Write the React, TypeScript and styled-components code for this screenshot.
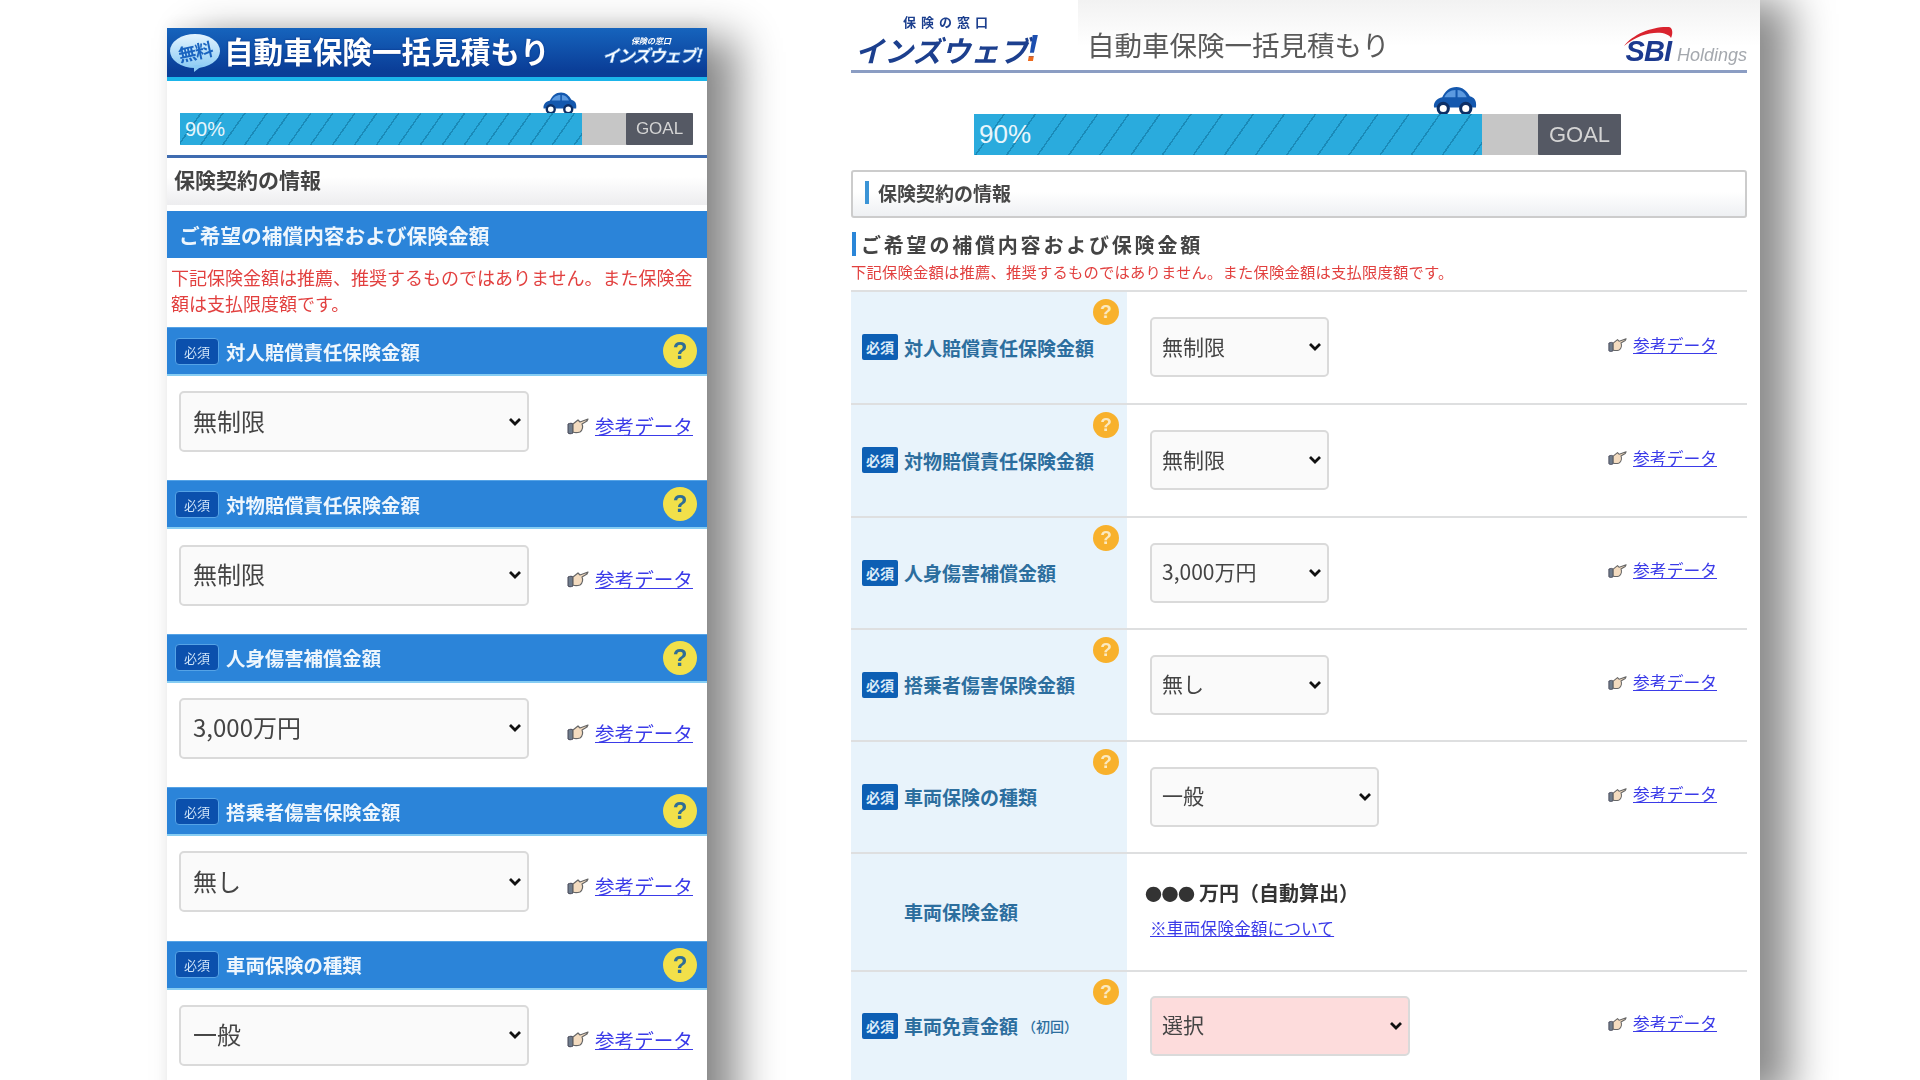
import styled, { createGlobalStyle } from "styled-components";

const GlobalStyle = createGlobalStyle`
  html, body {
    margin: 0;
    padding: 0;
    background: #fff;
  }
  body {
    font-family: "Noto Sans CJK JP", "Liberation Sans", sans-serif;
    overflow: hidden;
  }
`;

const Page = styled.div`
  display: flex;
  align-items: flex-start;
  width: 1920px;
  height: 1080px;
  overflow: hidden;
  padding-left: 167px;
  box-sizing: border-box;
  filter: blur(0.7px);
`;

/* ---------- shared drawings ---------- */

const Car = ({ width }: { width: number }) => (
  <svg width={width} viewBox="0 0 44 28">
    <path
      d="M2 22c-1-5 3-9 8-10 3-6 7-10 14-10 6 0 10 4 13 9 4 1 7 4 6 11z"
      fill="#1458ae"
    />
    <path d="M12 12c2-4 6-7 11-7v7z" fill="#5c9ae0" />
    <path d="M25 5c4 0 7 3 9 7h-9z" fill="#5c9ae0" />
    <circle cx="11" cy="23" r="5" fill="#fff" stroke="#0d2f66" strokeWidth="3" />
    <circle cx="33" cy="23" r="5" fill="#fff" stroke="#0d2f66" strokeWidth="3" />
  </svg>
);

const Hand = ({ width }: { width: number }) => (
  <svg width={width} viewBox="0 0 22 18">
    <path d="M1 7c2-1 4-1 5 0v9c-2 1-4 1-5 0z" fill="#6f7c8c" stroke="#445" strokeWidth="1" />
    <path
      d="M6 7l5-4 2 2 8-3-1 2-5 3c1 2 1 6-2 8-3 1-5 1-7 0z"
      fill="#f4dcc0"
      stroke="#666"
      strokeWidth="1.2"
      strokeLinejoin="round"
    />
  </svg>
);

const Track = styled.div<{ $w: number; $h: number }>`
  display: flex;
  width: ${({ $w }) => $w}px;
  height: ${({ $h }) => $h}px;
  background: #c6c6c6;
`;

const Fill = styled.div<{ $w: number; $size: number; $pitch: number }>`
  position: relative;
  display: flex;
  align-items: center;
  width: ${({ $w }) => $w}px;
  padding-left: 5px;
  box-sizing: border-box;
  color: #e8f6fc;
  font-family: "Liberation Sans", sans-serif;
  font-size: ${({ $size }) => $size}px;
  background: repeating-linear-gradient(
    125deg,
    #2aabdd 0,
    #2aabdd ${({ $pitch }) => $pitch - 1.5}px,
    #1a8ab8 ${({ $pitch }) => $pitch - 1.5}px,
    #1a8ab8 ${({ $pitch }) => $pitch}px
  );
`;

const CarSpot = styled.div`
  position: absolute;
  right: 5px;
  bottom: 100%;
  line-height: 0;
`;

const Goal = styled.div<{ $w: number; $size: number }>`
  display: flex;
  align-items: center;
  justify-content: center;
  width: ${({ $w }) => $w}px;
  margin-left: auto;
  background: #555964;
  color: #d4d4d4;
  font-family: "Liberation Sans", sans-serif;
  font-size: ${({ $size }) => $size}px;
  border-radius: 1px;
`;

const CHEVRON =
  "url(\"data:image/svg+xml,%3Csvg xmlns='http://www.w3.org/2000/svg' viewBox='0 0 14 10'%3E%3Cpath d='M2 2l5 5 5-5' fill='none' stroke='%23111' stroke-width='2.8'/%3E%3C/svg%3E\")";

const Select = styled.select<{
  $w: number;
  $h: number;
  $size: number;
  $pad: number;
  $pink?: boolean;
}>`
  appearance: none;
  width: ${({ $w }) => $w}px;
  height: ${({ $h }) => $h}px;
  flex-shrink: 0;
  padding: 0 24px 3px ${({ $pad }) => $pad}px;
  box-sizing: border-box;
  border: 2px solid #dadada;
  border-radius: 5px;
  background: ${CHEVRON} no-repeat right 5px center / 14px 10px
    ${({ $pink }) => ($pink ? "#fddcdc" : "#fafafa")};
  color: #444;
  font-family: "Noto Sans CJK JP", sans-serif;
  font-size: ${({ $size }) => $size}px;
`;

const RefLink = styled.a<{ $size: number; $gap: number }>`
  display: flex;
  align-items: center;
  gap: ${({ $gap }) => $gap}px;
  color: #3b3be8;
  font-size: ${({ $size }) => $size}px;
  line-height: 1.2;
  white-space: nowrap;

  span {
    text-decoration: underline;
  }
`;

const Help = styled.span<{ $size: number; $mobile?: boolean }>`
  display: flex;
  align-items: center;
  justify-content: center;
  width: ${({ $size }) => $size}px;
  height: ${({ $size }) => $size}px;
  border-radius: 50%;
  background: ${({ $mobile }) => ($mobile ? "#f2e04a" : "#f8b12c")};
  color: ${({ $mobile }) => ($mobile ? "#2f6d96" : "#fbe9c0")};
  font-family: "Liberation Sans", sans-serif;
  font-size: ${({ $size }) => Math.round($size * 0.72)}px;
  font-weight: 700;
`;

/* ---------- left panel (mobile) ---------- */

const Mobile = styled.section`
  flex-shrink: 0;
  width: 540px;
  height: 1100px;
  margin-top: 28px;
  background: #fff;
  box-shadow: 30px 10px 40px rgba(0, 0, 0, 0.46), 0 -6px 14px rgba(0, 0, 0, 0.06);
`;

const MobileHeader = styled.header`
  display: flex;
  align-items: center;
  height: 53px;
  box-sizing: border-box;
  padding: 0 3px 4px 3px;
  background: linear-gradient(#1664bd, #0a3d97 88%);
  border-bottom: 4px solid #1bb5ea;
`;

const Bubble = styled.span`
  position: relative;
  display: flex;
  align-items: center;
  justify-content: center;
  flex-shrink: 0;
  width: 50px;
  height: 34px;
  border-radius: 50%;
  background: linear-gradient(#e4f4fe, #8ccbf4);
  color: #1a64c0;
  font-size: 18px;
  font-weight: 700;
  letter-spacing: -1px;

  &::after {
    content: "";
    position: absolute;
    left: 24px;
    bottom: -4px;
    border-top: 7px solid #8ccbf4;
    border-right: 9px solid transparent;
  }
`;

const BubbleText = styled.span`
  display: block;
  transform: rotate(-12deg);
`;

const MobileTitle = styled.h1`
  margin: 0 0 0 4px;
  color: #fff;
  font-size: 29.6px;
  font-weight: 700;
  line-height: 1;
  white-space: nowrap;
  text-shadow: 0 0 2px #0a2f80;
`;

const MobileLogo = styled.div`
  display: flex;
  flex-direction: column;
  align-items: center;
  width: 106px;
  margin-left: auto;
  color: #fff;
  font-style: italic;
  font-weight: 700;
  line-height: 1.1;
  -webkit-text-stroke: 0.6px #7fb0e6;
`;

const MobileLogoTop = styled.span`
  font-size: 8px;
  -webkit-text-stroke: 0;
`;

const MobileLogoName = styled.span`
  font-size: 17px;
  letter-spacing: -1.5px;
  white-space: nowrap;
`;

const MobileProgress = styled.div`
  padding: 32px 14px 10px 13px;
  border-bottom: 3px solid #3f6cb0;
`;

const MobileSection = styled.h2`
  margin: 0;
  height: 47px;
  padding: 0 0 6px 7px;
  box-sizing: border-box;
  display: flex;
  align-items: center;
  color: #444;
  font-size: 21px;
  font-weight: 700;
  background: linear-gradient(#fff 40%, #ededef);
`;

const MobileBand = styled.h3`
  margin: 6px 0 0;
  height: 47px;
  padding-left: 12px;
  display: flex;
  align-items: center;
  color: #eef6fd;
  font-size: 20.7px;
  font-weight: 700;
  background: #2b84d9;
`;

const MobileNote = styled.p`
  margin: 0;
  height: 69px;
  padding: 7px 6px 0 4px;
  box-sizing: border-box;
  color: #e2403f;
  font-size: 18px;
  line-height: 25.5px;
`;

const ItemHead = styled.div`
  display: flex;
  align-items: center;
  height: 49px;
  box-sizing: border-box;
  padding: 0 10px 0 8px;
  background: #2b84d9;
  border-bottom: 2px solid #86cdf3;
  border-top: 1px solid #55a3e6;
  color: #eef6fd;
  font-size: 19.4px;
  font-weight: 700;
  white-space: nowrap;
`;

const MobileBadge = styled.span`
  display: flex;
  align-items: center;
  justify-content: center;
  width: 44px;
  height: 27px;
  margin-right: 7px;
  border: 1px solid #55a3e6;
  border-radius: 4px;
  box-sizing: border-box;
  background: #0b50ad;
  color: #cfe4f8;
  font-size: 13px;
  font-weight: 400;
`;

const HelpEnd = styled.span`
  margin-left: auto;
`;

const ItemBody = styled.div`
  display: flex;
  align-items: center;
  height: 104.4px;
  box-sizing: border-box;
  padding: 0 0 13px 12px;
`;

const MobileLinkSlot = styled.div`
  margin: 8px 0 0 38px;
`;

/* ---------- right panel (desktop) ---------- */

const Desktop = styled.section`
  flex-shrink: 0;
  width: 920px;
  height: 1100px;
  margin-left: 133px;
  padding: 0 13px 0 11px;
  box-sizing: border-box;
  background: linear-gradient(#f2f2f2, #fff) no-repeat right top / 682px 46px, #fff;
  box-shadow: 30px 0 40px rgba(0, 0, 0, 0.46);
  clip-path: inset(0 -90px 0 0);
`;

const DesktopHeader = styled.header`
  display: flex;
  align-items: flex-end;
  height: 73px;
  box-sizing: border-box;
  border-bottom: 3px solid #8b9dc3;
`;

const Logo = styled.div`
  display: flex;
  flex-direction: column;
  align-items: flex-start;
  width: 194px;
  margin-bottom: 4px;
  padding-left: 4px;
  box-sizing: border-box;
  color: #1c3f8e;
  font-weight: 700;
  line-height: 1;
`;

const LogoTop = styled.span`
  margin: 0 0 4px 48px;
  font-size: 13px;
  letter-spacing: 5px;
`;

const LogoName = styled.span`
  display: flex;
  align-items: center;
  height: 34px;
  font-size: 29px;
  font-style: italic;
  white-space: nowrap;
`;

const LogoBang = styled.span`
  margin-left: -2px;
  padding-right: 10px;
  font-family: "Liberation Sans", sans-serif;
  font-size: 36px;
  font-weight: 700;
  font-style: italic;
  background: linear-gradient(#1c4fb0 68%, #ee6a1c 72%);
  -webkit-background-clip: text;
  background-clip: text;
  color: transparent;
`;

const DesktopTitle = styled.h1`
  margin: 0 0 9px 42px;
  color: #5a5a5a;
  font-size: 27.5px;
  font-weight: 400;
  line-height: 1.2;
  white-space: nowrap;
`;

const Sbi = styled.div`
  position: relative;
  display: flex;
  align-items: baseline;
  gap: 6px;
  margin: 0 0 2px auto;
  font-family: "Liberation Sans", sans-serif;
  font-style: italic;
`;

const SbiArc = styled.svg`
  position: absolute;
  left: -3px;
  top: -9px;
`;

const SbiMark = styled.span`
  color: #1c3a8f;
  font-size: 29px;
  font-weight: 700;
  letter-spacing: -1px;
`;

const SbiText = styled.span`
  color: #a4a8ae;
  font-size: 18px;
`;

const DesktopProgress = styled.div`
  margin: 41px 0 0 123px;
`;

const SectionBox = styled.h2`
  display: flex;
  align-items: center;
  height: 48px;
  margin: 15px 0 0;
  padding: 0 0 3px 12px;
  box-sizing: border-box;
  border: 2px solid #ccc;
  border-radius: 3px;
  color: #484848;
  font-size: 19px;
  font-weight: 700;
  background: linear-gradient(#fff 45%, #eef0f3);

  &::before {
    content: "";
    width: 4px;
    height: 23px;
    margin-right: 9px;
    background: #3b94d6;
  }
`;

const SubHead = styled.h3`
  display: flex;
  align-items: center;
  height: 26px;
  margin: 13px 0 0 1px;
  color: #444;
  font-size: 20px;
  font-weight: 700;
  letter-spacing: 2.8px;

  &::before {
    content: "";
    width: 4px;
    height: 24px;
    margin-right: 5px;
    background: #2a86d8;
  }
`;

const DesktopNote = styled.p`
  margin: 2px 0 7px;
  color: #e2403f;
  font-size: 15.3px;
  letter-spacing: 0.2px;
  line-height: 24px;
  white-space: nowrap;
`;

const Row = styled.div<{ $h: number }>`
  display: grid;
  grid-template-columns: 276px 1fr;
  height: ${({ $h }) => $h}px;
  box-sizing: border-box;
  border-top: 2px solid #dedfe0;
`;

const LabelCell = styled.div`
  position: relative;
  display: flex;
  align-items: center;
  padding-left: 11px;
  background: #e8f3fb;
  color: #2c6e9e;
  font-size: 19px;
  font-weight: 700;
  white-space: nowrap;
`;

const PlainLabel = styled.span`
  margin-left: 42px;
`;

const Small = styled.small`
  font-size: 14px;
  font-weight: 500;
  margin-left: 4px;
`;

const Badge = styled.span`
  display: flex;
  align-items: center;
  justify-content: center;
  width: 36px;
  height: 26px;
  margin-right: 6px;
  border-radius: 2px;
  background: #0d5fb4;
  color: #dcecf8;
  font-size: 14px;
  font-weight: 700;
`;

const HelpSpot = styled.span`
  position: absolute;
  top: 7px;
  right: 8px;
`;

const ValueCell = styled.div`
  display: flex;
  align-items: center;
  padding: 0 30px 0 23px;
`;

const LinkEnd = styled.div`
  margin: -4px 0 0 auto;
`;

const Calc = styled.div`
  margin: 0 0 7px -5px;
`;

const CalcValue = styled.div`
  color: #333;
  font-size: 20px;
  font-weight: 700;
  line-height: 30px;
  white-space: nowrap;
`;

const CalcDots = styled.span`
  font-size: 17px;
  letter-spacing: -0.5px;
`;

const CalcLink = styled.a`
  display: block;
  margin: 9px 0 0 5px;
  color: #3b3be8;
  font-size: 16.8px;
  line-height: 20px;
  text-decoration: underline;
  white-space: nowrap;
`;

/* ---------- data ---------- */

const mobileItems = [
  { label: "対人賠償責任保険金額", value: "無制限" },
  { label: "対物賠償責任保険金額", value: "無制限" },
  { label: "人身傷害補償金額", value: "3,000万円" },
  { label: "搭乗者傷害保険金額", value: "無し" },
  { label: "車両保険の種類", value: "一般" },
];

const desktopItems = [
  { label: "対人賠償責任保険金額", value: "無制限", w: 179, h: 112.5 },
  { label: "対物賠償責任保険金額", value: "無制限", w: 179, h: 113 },
  { label: "人身傷害補償金額", value: "3,000万円", w: 179, h: 112 },
  { label: "搭乗者傷害保険金額", value: "無し", w: 179, h: 112 },
  { label: "車両保険の種類", value: "一般", w: 229, h: 112 },
];

const NOTE =
  "下記保険金額は推薦、推奨するものではありません。また保険金額は支払限度額です。";

function Progress({
  w,
  h,
  fill,
  goal,
  size,
  goalSize,
  pitch,
  car,
}: {
  w: number;
  h: number;
  fill: number;
  goal: number;
  size: number;
  goalSize: number;
  pitch: number;
  car: number;
}) {
  return (
    <Track $w={w} $h={h}>
      <Fill $w={fill} $size={size} $pitch={pitch}>
        90%
        <CarSpot>
          <Car width={car} />
        </CarSpot>
      </Fill>
      <Goal $w={goal} $size={goalSize}>
        GOAL
      </Goal>
    </Track>
  );
}

function ValueSelect({
  value,
  w,
  h,
  size,
  pad,
  pink,
}: {
  value: string;
  w: number;
  h: number;
  size: number;
  pad: number;
  pink?: boolean;
}) {
  return (
    <Select $w={w} $h={h} $size={size} $pad={pad} $pink={pink} defaultValue={value}>
      <option>{value}</option>
    </Select>
  );
}

function MobilePanel() {
  return (
    <Mobile>
      <MobileHeader>
        <Bubble>
          <BubbleText>無料</BubbleText>
        </Bubble>
        <MobileTitle>自動車保険一括見積もり</MobileTitle>
        <MobileLogo>
          <MobileLogoTop>保険の窓口</MobileLogoTop>
          <MobileLogoName>インズウェブ!</MobileLogoName>
        </MobileLogo>
      </MobileHeader>
      <MobileProgress>
        <Progress w={513} h={32} fill={402} goal={67} size={20} goalSize={17} pitch={18} car={35} />
      </MobileProgress>
      <MobileSection>保険契約の情報</MobileSection>
      <MobileBand>ご希望の補償内容および保険金額</MobileBand>
      <MobileNote>{NOTE}</MobileNote>
      {mobileItems.map((item) => (
        <div key={item.label}>
          <ItemHead>
            <MobileBadge>必須</MobileBadge>
            {item.label}
            <HelpEnd>
              <Help $size={34} $mobile>
                ?
              </Help>
            </HelpEnd>
          </ItemHead>
          <ItemBody>
            <ValueSelect value={item.value} w={350} h={61} size={24} pad={12} />
            <MobileLinkSlot>
              <RefLink href="#" $size={19.6} $gap={6}>
                <Hand width={22} />
                <span>参考データ</span>
              </RefLink>
            </MobileLinkSlot>
          </ItemBody>
        </div>
      ))}
    </Mobile>
  );
}

function DesktopLink() {
  return (
    <LinkEnd>
      <RefLink href="#" $size={16.8} $gap={6}>
        <Hand width={19} />
        <span>参考データ</span>
      </RefLink>
    </LinkEnd>
  );
}

function DesktopPanel() {
  return (
    <Desktop>
      <DesktopHeader>
        <Logo>
          <LogoTop>保険の窓口</LogoTop>
          <LogoName>
            インズウェブ<LogoBang>!</LogoBang>
          </LogoName>
        </Logo>
        <DesktopTitle>自動車保険一括見積もり</DesktopTitle>
        <Sbi>
          <SbiArc width="52" height="22" viewBox="0 0 52 22">
            <path d="M1 20C10 8 30 0 46 1c4 1 4 7 2 11C44 4 20 4 1 20z" fill="#d9232e" />
          </SbiArc>
          <SbiMark>SBI</SbiMark>
          <SbiText>Holdings</SbiText>
        </Sbi>
      </DesktopHeader>
      <DesktopProgress>
        <Progress w={647} h={41} fill={508} goal={83} size={26} goalSize={22} pitch={25.5} car={45} />
      </DesktopProgress>
      <SectionBox>保険契約の情報</SectionBox>
      <SubHead>ご希望の補償内容および保険金額</SubHead>
      <DesktopNote>{NOTE}</DesktopNote>
      {desktopItems.map((item) => (
        <Row key={item.label} $h={item.h}>
          <LabelCell>
            <Badge>必須</Badge>
            {item.label}
            <HelpSpot>
              <Help $size={26}>?</Help>
            </HelpSpot>
          </LabelCell>
          <ValueCell>
            <ValueSelect value={item.value} w={item.w} h={60} size={21} pad={10} />
            <DesktopLink />
          </ValueCell>
        </Row>
      ))}
      <Row $h={118}>
        <LabelCell>
          <PlainLabel>車両保険金額</PlainLabel>
        </LabelCell>
        <ValueCell>
          <Calc>
            <CalcValue>
              <CalcDots>●●●</CalcDots> 万円（自動算出）
            </CalcValue>
            <CalcLink href="#">※車両保険金額について</CalcLink>
          </Calc>
        </ValueCell>
      </Row>
      <Row $h={110}>
        <LabelCell>
          <Badge>必須</Badge>
          車両免責金額<Small>（初回）</Small>
          <HelpSpot>
            <Help $size={26}>?</Help>
          </HelpSpot>
        </LabelCell>
        <ValueCell>
          <ValueSelect value="選択" w={260} h={60} size={21} pad={10} pink />
          <DesktopLink />
        </ValueCell>
      </Row>
    </Desktop>
  );
}

export default function App() {
  return (
    <>
      <GlobalStyle />
      <Page>
        <MobilePanel />
        <DesktopPanel />
      </Page>
    </>
  );
}
